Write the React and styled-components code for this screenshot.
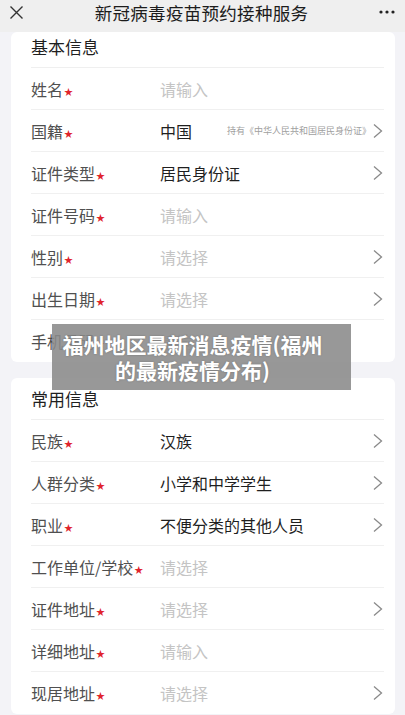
import React from 'react';
import styled, { createGlobalStyle } from 'styled-components';

const GlobalStyle = createGlobalStyle`
  html, body {
    margin: 0;
    padding: 0;
    background: #f3f3f7;
    font-family: "Noto Sans CJK SC", "Noto Sans", sans-serif;
  }
`;

const Page = styled.div`
  position: relative;
  width: 405px;
  height: 715px;
  overflow: hidden;
  background: #f3f3f7;
`;

const TopBar = styled.div`
  height: 32px;
  background: #efefef;
  display: flex;
  align-items: center;
  justify-content: space-between;
  padding: 0 10px 8px 9px;
  box-sizing: border-box;
`;

const BarTitle = styled.div`
  font-size: 17.5px;
  color: #1c1c1c;
  letter-spacing: 0.3px;
`;

const Card = styled.div`
  background: #ffffff;
  margin: ${p => (p.first ? '0' : '16px')} 10px 0 11px;
  border-radius: 6px;
  padding: 0 11px 0 20px;
`;

const CardTitle = styled.div`
  height: ${p => p.h}px;
  display: flex;
  align-items: center;
  font-size: 17px;
  color: #1f1f1f;
  border-bottom: 1px solid #efefef;
  box-sizing: border-box;
  padding-bottom: ${p => p.shift}px;
`;

const Row = styled.div`
  height: 42px;
  display: flex;
  align-items: center;
  border-bottom: ${p => (p.last ? 'none' : '1px solid #f0f0f0')};
  box-sizing: border-box;
`;

const Label = styled.div`
  width: 129px;
  flex-shrink: 0;
  font-size: 16px;
  color: #505050;
  white-space: nowrap;
`;

const Star = styled.span`
  color: #e0242c;
  font-size: 9px;
  margin-left: 1px;
  vertical-align: 1px;
`;

const Value = styled.div`
  flex: 1;
  font-size: 16px;
  color: ${p => (p.placeholder ? '#c4c4c4' : '#1f1f1f')};
  white-space: nowrap;
`;

const Hint = styled.span`
  font-size: 9px;
  color: #a0a0a0;
  margin-right: 1px;
  white-space: nowrap;
`;

const Arrow = styled.svg`
  width: 12px;
  height: 16px;
  flex-shrink: 0;
`;

const Banner = styled.div`
  position: absolute;
  left: 52px;
  top: 324px;
  width: 299px;
  height: 66px;
  background: rgba(138, 138, 138, 0.88);
  color: #ffffff;
  font-size: 21px;
  font-weight: 700;
  line-height: 26px;
  text-align: center;
  display: flex;
  align-items: center;
  justify-content: center;
  padding: 0 18px 0 0;
  box-sizing: border-box;
  white-space: nowrap;
  text-shadow: 0 0 2px rgba(0, 0, 0, 0.25);
`;

const Chevron = () => (
  <Arrow viewBox="0 0 12 16">
    <path d="M2 1.5 L9.5 8 L2 14.5" fill="none" stroke="#8a8a8a" strokeWidth="1.3" />
  </Arrow>
);

const basic = [
  { label: '姓名', value: '请输入', ph: true },
  { label: '国籍', value: '中国', hint: '持有《中华人民共和国居民身份证》', arrow: true },
  { label: '证件类型', value: '居民身份证', arrow: true },
  { label: '证件号码', value: '请输入', ph: true },
  { label: '性别', value: '请选择', ph: true, arrow: true },
  { label: '出生日期', value: '请选择', ph: true, arrow: true },
  { label: '手机号码', value: '请输入', ph: true },
];

const common = [
  { label: '民族', value: '汉族', arrow: true },
  { label: '人群分类', value: '小学和中学学生', arrow: true },
  { label: '职业', value: '不便分类的其他人员', arrow: true },
  { label: '工作单位/学校', value: '请选择', ph: true },
  { label: '证件地址', value: '请选择', ph: true, arrow: true },
  { label: '详细地址', value: '请输入', ph: true },
  { label: '现居地址', value: '请选择', ph: true, arrow: true },
];

const Rows = ({ items }) =>
  items.map((it, i) => (
    <Row key={it.label} last={i === items.length - 1}>
      <Label>
        {it.label}
        <Star>★</Star>
      </Label>
      <Value placeholder={it.ph}>{it.value}</Value>
      {it.hint && <Hint>{it.hint}</Hint>}
      {it.arrow && <Chevron />}
    </Row>
  ));

export default function App() {
  return (
    <Page>
      <GlobalStyle />
      <TopBar>
        <svg width="15" height="15" viewBox="0 0 15 15">
          <path d="M1.5 1.5 L13.5 13.5 M13.5 1.5 L1.5 13.5" stroke="#333" strokeWidth="1.4" />
        </svg>
        <BarTitle>新冠病毒疫苗预约接种服务</BarTitle>
        <svg width="16" height="4" viewBox="0 0 16 4">
          <circle cx="2" cy="2" r="1.6" fill="#222" />
          <circle cx="8" cy="2" r="1.6" fill="#222" />
          <circle cx="14" cy="2" r="1.6" fill="#222" />
        </svg>
      </TopBar>
      <Card first>
        <CardTitle h={36} shift={6}>基本信息</CardTitle>
        <Rows items={basic} />
      </Card>
      <Card>
        <CardTitle h={42} shift={0}>常用信息</CardTitle>
        <Rows items={common} />
      </Card>
      <Banner>
        福州地区最新消息疫情(福州
        <br />
        的最新疫情分布)
      </Banner>
    </Page>
  );
}
